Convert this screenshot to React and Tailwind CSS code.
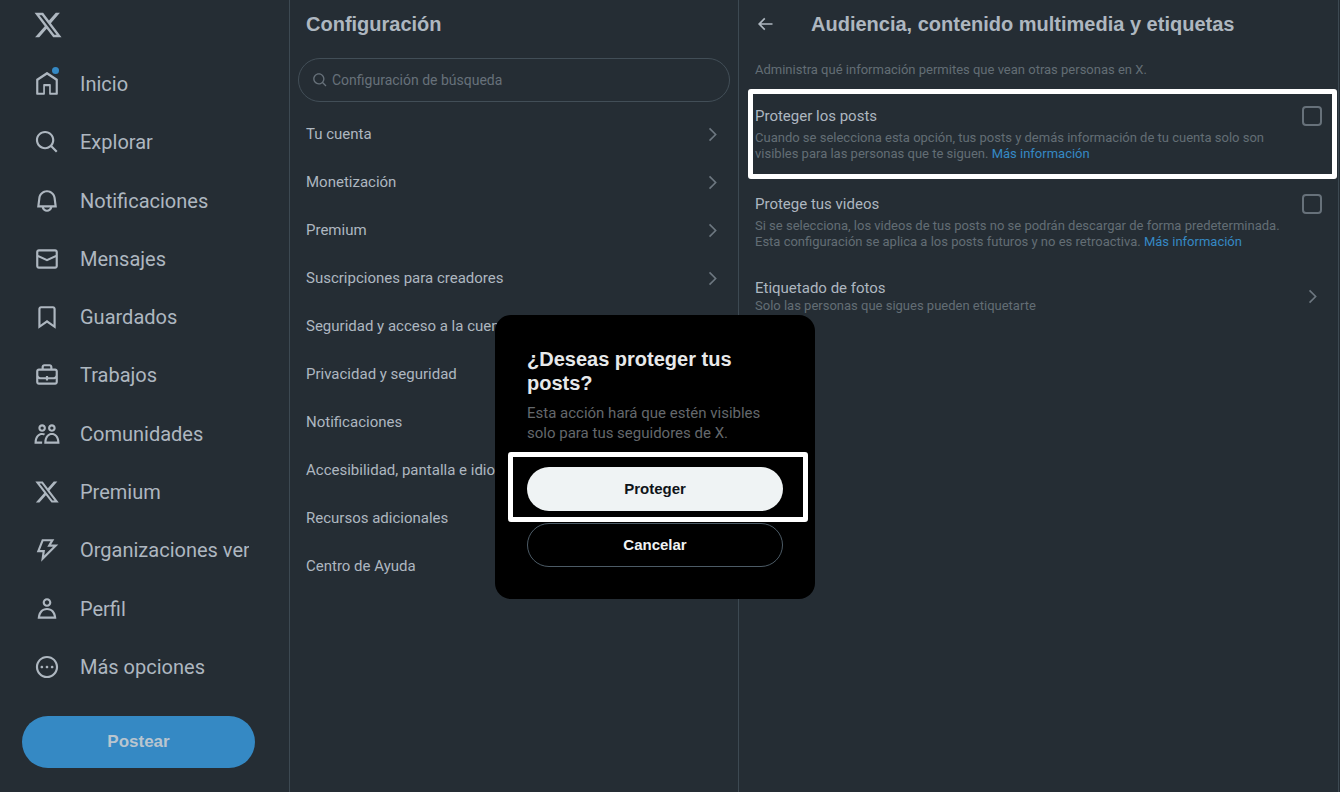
import React from "react"

const Icon = ({ d, className }) => (
	<svg className={className} viewBox="0 0 24 24" fill="currentColor" aria-hidden="true">
		<path d={d} />
	</svg>
)

const paths = {
	x: "M18.244 2.25h3.308l-7.227 8.26 8.502 11.24H16.17l-5.214-6.817L4.99 21.75H1.68l7.73-8.835L1.254 2.25H8.08l4.713 6.231zm-1.161 17.52h1.833L7.084 4.126H5.117z",
	home: "M21.591 7.146L12.52 1.157c-.316-.21-.724-.21-1.04 0l-9.071 5.99c-.26.173-.409.456-.409.757v13.183c0 .502.418.913.929.913H9.14c.51 0 .929-.41.929-.913v-7.075h3.909v7.075c0 .502.417.913.928.913h6.165c.511 0 .929-.41.929-.913V7.904c0-.301-.158-.584-.408-.758zM20 20l-4.5.01.011-7.097c0-.502-.418-.913-.928-.913H9.44c-.511 0-.929.41-.929.913L8.5 20H4V8.773l8.011-5.342L20 8.764z",
	search: "M10.25 3.75c-3.59 0-6.5 2.91-6.5 6.5s2.91 6.5 6.5 6.5c1.795 0 3.419-.726 4.596-1.904 1.178-1.177 1.904-2.801 1.904-4.596 0-3.59-2.91-6.5-6.5-6.5zm-8.5 6.5c0-4.694 3.806-8.5 8.5-8.5s8.5 3.806 8.5 8.5c0 1.986-.682 3.815-1.824 5.262l4.781 4.781-1.414 1.414-4.781-4.781c-1.447 1.142-3.276 1.824-5.262 1.824-4.694 0-8.5-3.806-8.5-8.5z",
	bell: "M19.993 9.042C19.48 5.017 16.054 2 11.996 2s-7.49 3.021-7.999 7.051L2.866 18H7.1c.463 2.282 2.481 4 4.9 4s4.437-1.718 4.9-4h4.236l-1.143-8.958zM12 20c-1.306 0-2.417-.835-2.829-2h5.658c-.412 1.165-1.523 2-2.829 2zm-6.866-4l.847-6.698C6.364 6.272 8.941 4 11.996 4s5.627 2.268 6.013 5.295L18.864 16H5.134z",
	mail: "M1.998 5.5c0-1.381 1.119-2.5 2.5-2.5h15c1.381 0 2.5 1.119 2.5 2.5v13c0 1.381-1.119 2.5-2.5 2.5h-15c-1.381 0-2.5-1.119-2.5-2.5v-13zm2.5-.5c-.276 0-.5.224-.5.5v2.764l8 3.638 8-3.636V5.5c0-.276-.224-.5-.5-.5h-15zm15.5 5.463l-8 3.636-8-3.638V18.5c0 .276.224.5.5.5h15c.276 0 .5-.224.5-.5v-8.037z",
	bookmark: "M4 4.5C4 3.12 5.119 2 6.5 2h11C18.881 2 20 3.12 20 4.5v18.44l-8-5.71-8 5.71V4.5zM6.5 4c-.276 0-.5.22-.5.5v14.56l6-4.29 6 4.29V4.5c0-.28-.224-.5-.5-.5h-11z",
	jobs: "M19.5 6H17V4.5C17 3.12 15.88 2 14.5 2h-5C8.12 2 7 3.12 7 4.5V6H4.5C3.12 6 2 7.12 2 8.5v10C2 19.88 3.12 21 4.5 21h15c1.38 0 2.5-1.12 2.5-2.5v-10C22 7.12 20.88 6 19.5 6zM9 4.5c0-.28.23-.5.5-.5h5c.28 0 .5.22.5.5V6H9V4.5zm11 14c0 .28-.22.5-.5.5h-15c-.27 0-.5-.22-.5-.5v-3.04c.59.35 1.27.54 2 .54h5v1h2v-1h5c.73 0 1.41-.19 2-.54v3.04zm0-6.49c0 1.1-.9 1.99-2 1.99h-5v-1h-2v1H6c-1.1 0-2-.9-2-2V8.5c0-.28.23-.5.5-.5h15c.28 0 .5.22.5.5v3.51z",
	people: "M7.501 19.917L7.471 21H.472l.029-1.027c.184-6.618 3.736-8.977 7-8.977.963 0 1.95.212 2.87.672-.444.478-.851 1.03-1.212 1.656-.507-.204-1.054-.329-1.658-.329-2.767 0-4.57 2.223-4.938 6.004H7.56c-.023.302-.05.599-.059.918zm15.998.056L23.528 21H9.472l.029-1.027c.184-6.618 3.736-8.977 7-8.977s6.816 2.358 7 8.977zM21.437 19c-.367-3.781-2.17-6.004-4.938-6.004s-4.57 2.223-4.938 6.004h9.875zm-4.938-9c-.799 0-1.527-.279-2.116-.73-.836-.64-1.384-1.638-1.384-2.77 0-1.93 1.567-3.5 3.5-3.5s3.5 1.57 3.5 3.5c0 1.132-.548 2.13-1.384 2.77-.589.451-1.317.73-2.116.73zm-1.5-3.5c0 .827.673 1.5 1.5 1.5s1.5-.673 1.5-1.5-.673-1.5-1.5-1.5-1.5.673-1.5 1.5zM7.5 3C9.433 3 11 4.57 11 6.5S9.433 10 7.5 10 4 8.43 4 6.5 5.567 3 7.5 3zm0 2C6.673 5 6 5.673 6 6.5S6.673 8 7.5 8 9 7.327 9 6.5 8.327 5 7.5 5z",
	bolt: "M7.323 2h11.443l-3 5h6.648L6.586 22.83 7.847 14H2.523l4.8-12zm1.354 2l-3.2 8h4.676l-.739 5.17L17.586 9h-5.352l3-5H8.677z",
	profile: "M5.651 19h12.698c-.337-1.8-1.023-3.21-1.945-4.19C15.318 13.65 13.838 13 12 13s-3.317.65-4.404 1.81c-.922.98-1.608 2.39-1.945 4.19zm.486-5.56C7.627 11.85 9.648 11 12 11s4.373.85 5.863 2.44c1.477 1.58 2.366 3.8 2.632 6.46l.11 1.1H3.395l.11-1.1c.266-2.66 1.155-4.88 2.632-6.46zM12 4c-1.105 0-2 .9-2 2s.895 2 2 2 2-.9 2-2-.895-2-2-2zM8 6c0-2.21 1.791-4 4-4s4 1.79 4 4-1.791 4-4 4-4-1.79-4-4z",
	more: "M3.75 12c0-4.56 3.69-8.25 8.25-8.25s8.25 3.69 8.25 8.25-3.69 8.25-8.25 8.25S3.75 16.56 3.75 12zM12 1.75C6.34 1.75 1.75 6.34 1.75 12S6.34 22.25 12 22.25 22.25 17.66 22.25 12 17.66 1.75 12 1.75zm-4.75 11.5c.69 0 1.25-.56 1.25-1.25s-.56-1.25-1.25-1.25S6 11.31 6 12s.56 1.25 1.25 1.25zm9.5 0c.69 0 1.25-.56 1.25-1.25s-.56-1.25-1.25-1.25-1.25.56-1.25 1.25.56 1.25 1.25 1.25zM13.25 12c0 .69-.56 1.25-1.25 1.25s-1.25-.56-1.25-1.25.56-1.25 1.25-1.25 1.25.56 1.25 1.25z",
	chevron: "M14.586 12L7.543 4.96l1.414-1.42L17.414 12l-8.457 8.46-1.414-1.42L14.586 12z",
	back: "M7.414 13l5.043 5.04-1.414 1.42L3.586 12l7.457-7.46 1.414 1.42L7.414 11H21v2H7.414z",
}

const navItems = [
	{ label: "Inicio", icon: paths.home, unread: true },
	{ label: "Explorar", icon: paths.search },
	{ label: "Notificaciones", icon: paths.bell },
	{ label: "Mensajes", icon: paths.mail },
	{ label: "Guardados", icon: paths.bookmark },
	{ label: "Trabajos", icon: paths.jobs },
	{ label: "Comunidades", icon: paths.people },
	{ label: "Premium", icon: paths.x },
	{ label: "Organizaciones verificadas", icon: paths.bolt },
	{ label: "Perfil", icon: paths.profile },
	{ label: "Más opciones", icon: paths.more },
]

const settings = [
	"Tu cuenta",
	"Monetización",
	"Premium",
	"Suscripciones para creadores",
	"Seguridad y acceso a la cuenta",
	"Privacidad y seguridad",
	"Notificaciones",
	"Accesibilidad, pantalla e idiomas",
	"Recursos adicionales",
	"Centro de Ayuda",
]

const Sidebar = () => (
	<header className="w-[290px] shrink-0 border-r border-[#3d4952]">
		<a href="#" aria-label="X" className="ml-[33px] flex h-[50px] w-[30px] items-center">
			<Icon d={paths.x} className="size-[30px]" />
		</a>
		<nav className="mt-[9px] pl-[34px] pr-10">
			<ul className="flex h-[633px] flex-col justify-between">
				{navItems.map(each => (
					<li key={each.label}>
						<a href="#" className="flex h-[50px] items-center gap-5">
							<span className="relative shrink-0">
								<Icon d={each.icon} className="size-[26px]" />
								{each.unread && (
									<span className="absolute -top-1 right-px size-[7px] rounded-full bg-[#3589c4]" />
								)}
							</span>
							<span className="overflow-hidden whitespace-nowrap text-xl leading-6">
								{each.label}
							</span>
						</a>
					</li>
				))}
			</ul>
		</nav>
		<div className="pl-[22px] pr-[34px] pt-6">
			<button type="button" className="h-[52px] w-full rounded-full bg-[#3589c4] font-['Liberation_Sans',sans-serif] text-[17px] font-bold text-[#b9c5cf]">
				Postear
			</button>
		</div>
	</header>
)

const SettingsList = () => (
	<section className="w-[449px] shrink-0 border-r border-[#3d4952]">
		<h1 className="px-4 pt-3 font-['Liberation_Sans',sans-serif] text-xl font-bold leading-6">Configuración</h1>
		<label className="mx-2 mt-[22px] flex h-11 items-center gap-1 rounded-full border border-[#424e57] pl-[13px] pr-4 text-[#67717a]">
			<Icon d={paths.search} className="size-4 shrink-0" />
			<input
				type="text"
				aria-label="Configuración de búsqueda"
				placeholder="Configuración de búsqueda"
				className="min-w-0 flex-1 bg-transparent text-sm leading-5 outline-none placeholder:text-[#67717a]"
			/>
		</label>
		<ul className="mt-2">
			{settings.map(each => (
				<li key={each}>
					<a href="#" className="flex h-12 items-center justify-between px-4 text-[15px] leading-5">
						{each}
						<Icon d={paths.chevron} className="size-[19px] text-[#6d7780]" />
					</a>
				</li>
			))}
		</ul>
	</section>
)

const CheckRow = ({ id, label, children }) => (
	<div>
		<div className="flex h-5 items-center justify-between">
			<label htmlFor={id} className="text-[15px] leading-5">{label}</label>
			<input
				id={id}
				type="checkbox"
				className="size-5 appearance-none rounded-sm border-2 border-[#67717a]"
			/>
		</div>
		<p className="mt-1 pr-6 text-[13px] leading-4 text-[#636d75]">
			{children}{" "}
			<a href="#" className="text-[#3589c4]">Más información</a>
		</p>
	</div>
)

const Detail = () => (
	<main className="mr-px min-w-0 flex-1 border-r border-[#3d4952] px-4">
		<div className="flex h-12 items-center gap-9">
			<button type="button" aria-label="Atrás">
				<Icon d={paths.back} className="size-5" />
			</button>
			<h2 className="font-['Liberation_Sans',sans-serif] text-xl font-bold leading-6">
				Audiencia, contenido multimedia y etiquetas
			</h2>
		</div>
		<p className="mt-[14px] text-[13px] leading-4 text-[#636d75]">
			Administra qué información permites que vean otras personas en X.
		</p>
		<div className="relative mt-7">
			<CheckRow id="protect-posts" label="Proteger los posts">
				Cuando se selecciona esta opción, tus posts y demás información de tu cuenta solo son visibles para las personas que te siguen.
			</CheckRow>
			{/* Highlight */}
			<div className="pointer-events-none absolute -bottom-[17px] -left-[7px] -right-[15px] -top-[17px] rounded-[3px] border-[5px] border-white" />
		</div>
		<div className="mt-8">
			<CheckRow id="protect-videos" label="Protege tus videos">
				Si se selecciona, los videos de tus posts no se podrán descargar de forma predeterminada. Esta configuración se aplica a los posts futuros y no es retroactiva.
			</CheckRow>
		</div>
		<a href="#" className="mt-7 flex items-center justify-between">
			<span>
				<span className="block text-[15px] leading-5">Etiquetado de fotos</span>
				<span className="block text-[13px] leading-4 text-[#636d75]">Solo las personas que sigues pueden etiquetarte</span>
			</span>
			<Icon d={paths.chevron} className="size-[19px] text-[#6d7780]" />
		</a>
	</main>
)

const Dialog = () => (
	<div
		role="dialog"
		aria-labelledby="dialog-title"
		className="absolute left-[495px] top-[315px] w-80 rounded-2xl bg-black p-8"
	>
		<h2 id="dialog-title" className="font-['Liberation_Sans',sans-serif] text-xl font-bold leading-6 text-[#e7e9ea]">
			¿Deseas proteger tus posts?
		</h2>
		<p className="mt-2 text-[15px] leading-5 text-[#64686c]">
			Esta acción hará que estén visibles solo para tus seguidores de X.
		</p>
		<div className="relative mt-6">
			<button type="button" className="h-11 w-full rounded-full bg-[#eff3f4] font-['Liberation_Sans',sans-serif] text-[15px] font-bold text-[#0f1419]">
				Proteger
			</button>
			{/* Highlight */}
			<div className="pointer-events-none absolute -bottom-[11px] -left-[19px] -right-[25px] -top-[15px] rounded-[3px] border-[5px] border-white" />
		</div>
		<button type="button" className="mt-3 h-11 w-full rounded-full border border-[#4c5b66] font-['Liberation_Sans',sans-serif] text-[15px] font-bold text-[#eff3f4]">
			Cancelar
		</button>
	</div>
)

const App = () => (
	<div className="relative flex min-h-screen bg-[#252d34] font-['Roboto',sans-serif] text-[#aeb7c0]">
		<Sidebar />
		<SettingsList />
		<Detail />
		<Dialog />
	</div>
)

export default App
